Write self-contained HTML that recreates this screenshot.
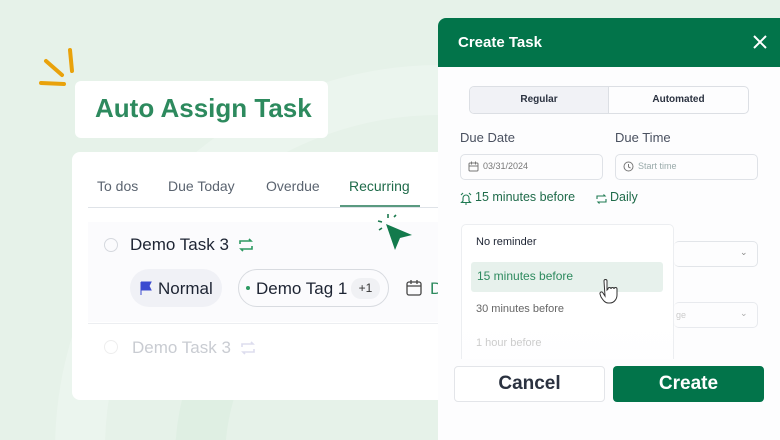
<!DOCTYPE html>
<html><head><style>
*{margin:0;padding:0;box-sizing:border-box}
html,body{width:780px;height:440px;overflow:hidden}
body{font-family:"Liberation Sans",sans-serif;background:#e6f2e9}
#w{position:relative;width:780px;height:440px;overflow:hidden}
.abs{position:absolute}
</style></head><body><div id="w">
<svg class="abs" style="left:0;top:0" width="780" height="440"><circle cx="440" cy="450" r="360" fill="none" stroke="rgba(255,255,255,0.22)" stroke-width="50"/><circle cx="440" cy="460" r="240" fill="none" stroke="rgba(210,235,218,0.35)" stroke-width="50"/></svg>
<svg class="abs" style="left:36px;top:45px" width="45" height="45"><g stroke="#e9a20b" stroke-width="4" stroke-linecap="round"><line x1="34" y1="5" x2="36" y2="26"/><line x1="10" y1="16" x2="26" y2="30"/><line x1="5" y1="38" x2="28" y2="39"/></g></svg>
<div class="abs" style="left:75px;top:81px;width:253px;height:57px;background:#fff;border-radius:6px;"></div>
<div class="abs" style="left:95px;top:93px;font-size:26px;font-weight:bold;color:#2d8a5e;">Auto Assign Task</div>
<div class="abs" style="left:72px;top:152px;width:380px;height:248px;background:#fff;border-radius:8px"></div>
<div class="abs" style="left:88px;top:207px;width:350px;height:1px;background:#dfe3e8"></div>
<div class="abs" style="left:340px;top:205px;width:80px;height:2px;background:#5a9a80"></div>
<div class="abs" style="top:178px;left:97px;font-size:14px;color:#5b6470">To dos</div>
<div class="abs" style="top:178px;left:168px;font-size:14px;color:#5b6470">Due Today</div>
<div class="abs" style="top:178px;left:266px;font-size:14px;color:#5b6470">Overdue</div>
<div class="abs" style="top:178px;left:349px;font-size:14px;color:#1f6b4a">Recurring</div>
<div class="abs" style="left:88px;top:222px;width:350px;height:100px;background:#fbfbfd"></div>
<div class="abs" style="left:88px;top:323px;width:350px;height:1px;background:#eceef1"></div>
<div class="abs" style="left:104px;top:238px;width:14px;height:14px;border:1.5px solid #d5d8de;border-radius:50%"></div>
<div class="abs" style="left:130px;top:235px;font-size:17px;color:#1d2433">Demo Task 3</div>
<svg class="abs" style="left:236px;top:236px" width="20" height="18" fill="none" stroke="#2d9a62" stroke-width="1.6"><path d="M4 8V5h11l-2-2M16 10v3H5l2 2"/></svg>
<svg class="abs" style="left:374px;top:212px" width="42" height="42"><g stroke="#1c7a4f" stroke-width="1.6"><line x1="14" y1="2" x2="14" y2="6"/><line x1="4" y1="9" x2="8" y2="10"/><line x1="5" y1="18" x2="8" y2="16"/><line x1="20" y1="5" x2="22" y2="3"/></g><path d="M12 12 L38 23 L26 26 L21 38Z" fill="#127a4c"/></svg>
<div class="abs" style="left:130px;top:269px;width:92px;height:38px;background:#f0f1f6;border-radius:19px"></div>
<svg class="abs" style="left:140px;top:281px" width="12" height="14"><path d="M1 1v13M1 1h10l-2 4 2 4H1" fill="#3b4bd0" stroke="#3b4bd0"/></svg>
<div class="abs" style="left:158px;top:279px;font-size:17px;color:#1d2433">Normal</div>
<div class="abs" style="left:238px;top:269px;width:151px;height:38px;border:1px solid #d8dbe0;border-radius:19px"></div>
<div class="abs" style="left:246px;top:286px;width:4px;height:4px;border-radius:50%;background:#2d9a62"></div>
<div class="abs" style="left:256px;top:279px;font-size:17px;color:#1d2433">Demo Tag 1</div>
<div class="abs" style="left:351px;top:278px;width:29px;height:21px;background:#f0f1f4;border-radius:10px;font-size:12px;text-align:center;line-height:21px;color:#333">+1</div>
<svg class="abs" style="left:405px;top:279px" width="18" height="18" fill="none" stroke="#444" stroke-width="1.3"><rect x="2" y="3" width="14" height="13" rx="2"/><path d="M2 7h14M6 1v4M12 1v4"/></svg>
<div class="abs" style="left:430px;top:279px;font-size:17px;color:#2d8a5e">D</div>
<div class="abs" style="left:104px;top:340px;width:14px;height:14px;border:1.5px solid #eee;border-radius:50%"></div>
<div class="abs" style="left:132px;top:338px;font-size:17px;color:#c9ccd2">Demo Task 3</div>
<svg class="abs" style="left:238px;top:339px" width="20" height="18" fill="none" stroke="#dde" stroke-width="1.6"><path d="M4 8V5h11l-2-2M16 10v3H5l2 2"/></svg>

<div class="abs" style="left:438px;top:18px;width:342px;height:422px;background:#fdfdfe;border-top-left-radius:8px;overflow:hidden">
<div style="height:49px;background:#02744a"></div>
</div>
<div class="abs" style="left:458px;top:34px;font-size:15px;font-weight:bold;color:#fff">Create Task</div>
<svg class="abs" style="left:753px;top:35px" width="14" height="14" stroke="#fff" stroke-width="2"><path d="M1 1L13 13M13 1L1 13"/></svg>
<div class="abs" style="left:469px;top:86px;width:280px;height:28px;border:1px solid #dcdfe4;border-radius:5px;overflow:hidden;display:flex;font-size:10px;font-weight:bold;color:#2b3240">
<div style="width:139px;background:#f1f2f6;border-right:1px solid #dcdfe4;text-align:center;line-height:26px">Regular</div>
<div style="flex:1;text-align:center;line-height:26px">Automated</div></div>
<div class="abs" style="left:460px;top:130px;font-size:13px;color:#4a5160">Due Date</div>
<div class="abs" style="left:615px;top:130px;font-size:13px;color:#4a5160">Due Time</div>
<div class="abs" style="left:460px;top:154px;width:143px;height:26px;border:1px solid #dfe2e7;border-radius:5px"></div>
<div class="abs" style="left:615px;top:154px;width:143px;height:26px;border:1px solid #dfe2e7;border-radius:5px"></div>
<svg class="abs" style="left:468px;top:161px" width="11" height="11" fill="none" stroke="#777" stroke-width="1"><rect x="1" y="2" width="9" height="8" rx="1"/><path d="M1 5h9M3.5 .5v3M7.5 .5v3"/></svg>
<div class="abs" style="left:483px;top:161px;font-size:9px;color:#777">03/31/2024</div>
<svg class="abs" style="left:623px;top:161px" width="11" height="11" fill="none" stroke="#777" stroke-width="1"><circle cx="5.5" cy="5.5" r="4.5"/><path d="M5.5 3v3l2 1"/></svg>
<div class="abs" style="left:638px;top:161px;font-size:9px;color:#9aa">Start time</div>
<svg class="abs" style="left:460px;top:192px" width="12" height="13" fill="none" stroke="#1f7a52" stroke-width="1.1"><path d="M3 9V6a3 3 0 016 0v3l1.5 1.5h-9zM5 12h2M1 3l2-2M11 3L9 1"/></svg>
<div class="abs" style="left:475px;top:190px;font-size:12.5px;color:#1f6b4a">15 minutes before</div>
<svg class="abs" style="left:595px;top:193px" width="13" height="12" fill="none" stroke="#1f7a52" stroke-width="1.1"><path d="M2 6V3h8l-1.5-1.5M11 6v3H3l1.5 1.5"/></svg>
<div class="abs" style="left:610px;top:190px;font-size:12.5px;color:#1f6b4a">Daily</div>
<div class="abs" style="left:674px;top:241px;width:84px;height:26px;border:1px solid #e2e5e9;border-radius:5px;border-left:none"></div>
<div class="abs" style="left:740px;top:247px;font-size:9px;color:#888">⌄</div>
<div class="abs" style="left:674px;top:302px;width:84px;height:26px;border:1px solid #e8eaee;border-radius:5px;border-left:none"></div>
<div class="abs" style="left:676px;top:310px;font-size:9px;color:#ccc">ge</div>
<div class="abs" style="left:740px;top:308px;font-size:9px;color:#aaa">⌄</div>
<div class="abs" style="left:461px;top:224px;width:213px;height:135px;background:linear-gradient(#fff 70%,rgba(255,255,255,0.6));border:1px solid #eceef1;border-bottom:none;border-radius:5px 5px 0 0"></div>
<div class="abs" style="left:476px;top:236px;font-size:11px;color:#1d2433">No reminder</div>
<div class="abs" style="left:471px;top:262px;width:192px;height:30px;background:#e7f1ec;border-radius:3px"></div>
<div class="abs" style="left:477px;top:269px;font-size:12px;color:#2d8a5e">15 minutes before</div>
<div class="abs" style="left:476px;top:303px;font-size:11px;color:#666">30 minutes before</div>
<div class="abs" style="left:476px;top:337px;font-size:11px;color:#ccc">1 hour before</div>
<svg class="abs" style="left:598px;top:279px" width="22" height="28" fill="#fff" stroke="#333" stroke-width="1"><path d="M6 2a1.5 1.5 0 013 0v9l1-1a1.5 1.5 0 013 0 1.5 1.5 0 013 0 1.5 1.5 0 013 0v6c0 4-3 8-7 8h-2c-3 0-5-3-7-6l-1-3a1.5 1.5 0 013-1l2 3z"/></svg>
<div class="abs" style="left:454px;top:366px;width:151px;height:36px;border:1px solid #e3e5e9;border-radius:4px;background:#fff;text-align:center;line-height:34px;font-size:19px;font-weight:bold;color:#2b3240">Cancel</div>
<div class="abs" style="left:613px;top:366px;width:151px;height:36px;border-radius:4px;background:#02744a;text-align:center;line-height:36px;font-size:19px;font-weight:bold;color:#fff">Create</div>
</div></body></html>
